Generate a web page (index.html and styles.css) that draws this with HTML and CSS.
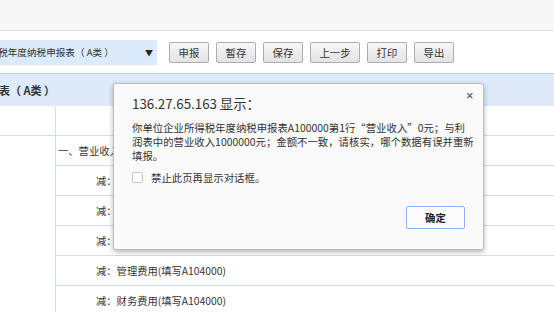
FILE: index.html
```html
<!DOCTYPE html>
<html lang="zh-CN">

<head>
    <meta charset="utf-8">
    <meta name="viewport" content="width=device-width, initial-scale=1.0">
    <title>企业所得税年度纳税申报</title>
    <link rel="stylesheet" href="styles.css">
</head>

<body>
    <div class="topbar"></div>
    <div class="toolbar">
        <div class="select">
            <span class="select-text">所得税年度纳税申报表（ A类 ）</span>
            <span class="caret">▼</span>
        </div>
        <button class="btn">申报</button>
        <button class="btn">暂存</button>
        <button class="btn">保存</button>
        <button class="btn wide">上一步</button>
        <button class="btn">打印</button>
        <button class="btn">导出</button>
    </div>
    <div class="band">
        <span class="band-title">表（ A类 ）</span>
    </div>
    <table class="grid">
        <tr>
            <td class="side"></td>
            <td></td>
        </tr>
        <tr>
            <td class="side" rowspan="6"></td>
            <td>一、营业收入(填写A101010\101020\103000)</td>
        </tr>
        <tr><td class="sub">减：营业成本(填写A102010\102020\103000)</td></tr>
        <tr><td class="sub">减：营业税金及附加</td></tr>
        <tr><td class="sub">减：销售费用(填写A104000)</td></tr>
        <tr><td class="sub">减：管理费用(填写A104000)</td></tr>
        <tr><td class="sub">减：财务费用(填写A104000)</td></tr>
    </table>

    <div class="dialog">
        <span class="close">✕</span>
        <div class="dialog-title">136.27.65.163 显示：</div>
        <p class="dialog-msg">你单位企业所得税年度纳税申报表A100000第1行“营业收入”0元；与利<br>润表中的营业收入1000000元；金额不一致，请核实，哪个数据有误并重新<br>填报。</p>
        <label class="dialog-check"><span class="box"></span>禁止此页再显示对话框。</label>
        <div class="dialog-actions">
            <button class="ok">确定</button>
        </div>
    </div>
</body>

</html>
```

FILE: styles.css
```css
body {
    margin: 0;
    font-family: "Noto Sans CJK SC", sans-serif;
    color: #333;
    background: #fff;
    overflow: hidden;
}

.topbar {
    background: #f7f7f7;
    border-bottom: 1px solid #e4e4e4;
    height: 30px;
}

.toolbar {
    align-items: center;
    display: flex;
    gap: 7px;
    height: 42px;
}

.select {
    align-items: center;
    background: #dcebfb;
    box-sizing: border-box;
    display: flex;
    font-size: 9.6px;
    height: 25px;
    justify-content: space-between;
    margin-right: 5px;
    overflow: hidden;
    padding-right: 4px;
    width: 157px;
}

.select-text {
    margin-left: -21px;
    white-space: nowrap;
}

.caret {
    font-size: 8px;
    color: #222;
}

.btn {
    background: linear-gradient(#f7f7f7, #e3e3e3);
    border: 1px solid #acacac;
    border-radius: 2px;
    color: #333;
    font-family: inherit;
    font-size: 10.4px;
    height: 21px;
    padding: 0;
    width: 40px;
}

.btn.wide {
    width: 50px;
}

.band {
    background: #dceafa;
    border-top: 1px solid #bcd3ee;
    box-sizing: border-box;
    height: 33px;
    display: flex;
    align-items: center;
}

.band-title {
    font-size: 11px;
    font-weight: bold;
    margin-left: -1px;
}

.grid {
    border-collapse: collapse;
    font-size: 10.3px;
    width: 100%;
}

.grid td {
    border-bottom: 1px solid #cddff2;
    height: 29px;
    padding: 0 0 0 2px;
    white-space: nowrap;
}

.grid td.side {
    border-right: 1px solid #cddff2;
    padding: 0;
    width: 55px;
}

.grid td.sub {
    padding-left: 40px;
}

.dialog {
    background: #fafafa;
    border: 1px solid #bdbdbd;
    border-radius: 3px;
    box-shadow: 0 2px 5px rgba(0, 0, 0, 0.3);
    box-sizing: border-box;
    height: 167px;
    left: 113px;
    padding: 12px 18px 18px;
    position: absolute;
    top: 83px;
    width: 371px;
}

.close {
    color: #666;
    font-size: 9px;
    font-weight: bold;
    position: absolute;
    right: 9px;
    top: 5px;
}

.dialog-title {
    font-size: 13.3px;
    line-height: 16px;
}

.dialog-msg {
    font-size: 10.4px;
    line-height: 14px;
    margin: 9px -8px 0 0;
    white-space: nowrap;
}

.dialog-check {
    align-items: center;
    display: flex;
    font-size: 10.4px;
    gap: 8px;
    height: 15px;
    margin-top: 7px;
}

.box {
    background: #fff;
    border: 1px solid #c6c6c6;
    border-radius: 2px;
    box-sizing: border-box;
    height: 11px;
    width: 11px;
}

.dialog-actions {
    display: flex;
    justify-content: flex-end;
    margin-top: 21px;
}

.ok {
    background: #fcfcfc;
    border: 1px solid #8fb3ef;
    border-radius: 2px;
    color: #222;
    font-family: inherit;
    font-size: 10.4px;
    font-weight: bold;
    height: 23px;
    padding: 0;
    width: 59px;
}
```
